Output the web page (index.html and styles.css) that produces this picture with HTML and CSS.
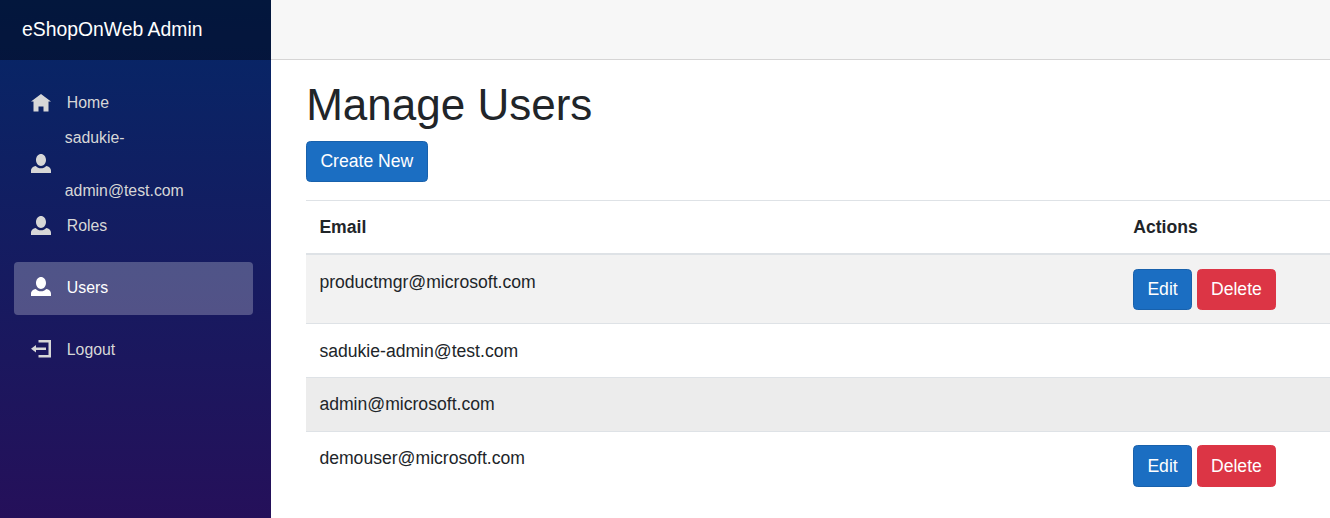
FILE: index.html
```html
<!DOCTYPE html>
<html lang="en">
<head>
<meta charset="utf-8">
<title>Manage Users</title>
<link rel="stylesheet" href="styles.css">
</head>
<body>
<div class="page">
  <aside class="sidebar">
    <div class="brand-row"><a class="brand" href="#">eShopOnWeb Admin</a></div>
    <ul class="nav">
      <li class="nav-item"><a class="nav-link" href="#">
        <svg class="icon" viewBox="0 0 8 8"><path d="M4 0l-4 3h1v4h2v-2h2v2h2v-4.03l1 .03-4-3z"/></svg><span>Home</span></a></li>
      <li class="nav-item"><a class="nav-link" href="#">
        <svg class="icon icon-person" viewBox="0 0 8 8" preserveAspectRatio="none"><path d="M4 0c-1.1 0-2 1.12-2 2.5s.9 2.5 2 2.5 2-1.12 2-2.5-.9-2.5-2-2.5zm-2.09 5c-1.06.05-1.91.92-1.91 2v1h8v-1c0-1.08-.84-1.95-1.91-2-.54.61-1.28 1-2.09 1-.81 0-1.55-.39-2.09-1z"/></svg><span class="wrapped">sadukie-<br>admin@test.com</span></a></li>
      <li class="nav-item"><a class="nav-link" href="#">
        <svg class="icon icon-person" viewBox="0 0 8 8" preserveAspectRatio="none"><path d="M4 0c-1.1 0-2 1.12-2 2.5s.9 2.5 2 2.5 2-1.12 2-2.5-.9-2.5-2-2.5zm-2.09 5c-1.06.05-1.91.92-1.91 2v1h8v-1c0-1.08-.84-1.95-1.91-2-.54.61-1.28 1-2.09 1-.81 0-1.55-.39-2.09-1z"/></svg><span>Roles</span></a></li>
      <li class="nav-item"><a class="nav-link active" href="#">
        <svg class="icon icon-person" viewBox="0 0 8 8" preserveAspectRatio="none"><path d="M4 0c-1.1 0-2 1.12-2 2.5s.9 2.5 2 2.5 2-1.12 2-2.5-.9-2.5-2-2.5zm-2.09 5c-1.06.05-1.91.92-1.91 2v1h8v-1c0-1.08-.84-1.95-1.91-2-.54.61-1.28 1-2.09 1-.81 0-1.55-.39-2.09-1z"/></svg><span>Users</span></a></li>
      <li class="nav-item"><a class="nav-link" href="#">
        <svg class="icon" viewBox="0 0 8 8"><path d="M3 0v1h4v5h-4v1h5v-7h-5zm-1 2l-2 1.5 2 1.5v-1h4v-1h-4v-1z"/></svg><span>Logout</span></a></li>
    </ul>
  </aside>
  <main class="main">
    <div class="top-row"></div>
    <div class="content">
      <h1 class="title">Manage Users</h1>
      <p class="actions-line"><a class="btn btn-primary btn-create" href="#">Create New</a></p>
      <table class="table">
        <thead>
          <tr><th>Email</th><th class="col-actions">Actions</th></tr>
        </thead>
        <tbody>
          <tr class="striped">
            <td>productmgr@microsoft.com</td>
            <td><a class="btn btn-primary" href="#">Edit</a> <a class="btn btn-danger" href="#">Delete</a></td>
          </tr>
          <tr><td>sadukie-admin@test.com</td><td></td></tr>
          <tr class="hovered"><td>admin@microsoft.com</td><td></td></tr>
          <tr>
            <td>demouser@microsoft.com</td>
            <td><a class="btn btn-primary" href="#">Edit</a> <a class="btn btn-danger" href="#">Delete</a></td>
          </tr>
        </tbody>
      </table>
    </div>
  </main>
</div>
</body>
</html>
```
FILE: styles.css
```css
html { font-size: 17.6px; }
* { box-sizing: border-box; }
body {
  margin: 0;
  font-family: "Liberation Sans", Arial, sans-serif;
  font-size: 1rem;
  line-height: 1.5;
  color: #212529;
  background: #fff;
}
a { text-decoration: none; }

.page { display: flex; height: 518px; overflow: hidden; }

.sidebar {
  flex: 0 0 271px;
  background: linear-gradient(180deg, #052767 0, #25105a 518px);
}
.brand-row {
  height: 59.6px;
  display: flex;
  align-items: center;
  padding-left: 22px;
  background: rgba(0, 0, 0, .4);
}
.brand { color: #fff; font-size: 1.1rem; }

.nav { list-style: none; margin: 0; padding: 1rem 18px 0 14px; }
.nav-item { padding-bottom: .5rem; font-size: .9rem; }
.nav-link {
  display: flex;
  align-items: center;
  height: 3rem;
  line-height: 3rem;
  padding-left: 17px;
  color: #d7d7d7;
  border-radius: 4px;
}
.nav-link.active { background: rgba(255, 255, 255, .25); color: #fff; }
.icon { flex: none; width: 20px; height: 20px; margin-right: 15.8px; fill: currentColor; }
.icon-person { height: 19px; margin-bottom: 3px; }
.wrapped { margin-left: -2px; }

.main { flex: 1; min-width: 0; }
.top-row { height: 59.6px; background: #f7f7f7; border-bottom: 1px solid #d6d5d5; }
.content { padding: 1.1rem 0 0 2rem; }
.title { margin: 0 0 .5rem; font-size: 2.5rem; font-weight: 400; line-height: 1.2; }
.actions-line { margin: 0 0 1rem; }

.btn {
  display: inline-block;
  padding: .375rem .75rem;
  border: 1px solid transparent;
  border-radius: .25rem;
  font-size: 1rem;
  line-height: 1.5;
  color: #fff;
  vertical-align: middle;
}
.btn-create { padding-right: 13.8px; }
.btn-primary { background: #1b6ec2; border-color: #1861ac; }
.btn-danger { background: #dc3545; border-color: #dc3545; }

.table { width: 100%; border-collapse: collapse; }
.table th, .table td { padding: .75rem; border-top: 1px solid #dee2e6; text-align: left; vertical-align: top; }
.table thead th { border-bottom: 2px solid #dee2e6; font-weight: 700; }
.col-actions { width: 210px; }
.striped { background: #f2f2f2; }
.hovered { background: #ececec; }
```
